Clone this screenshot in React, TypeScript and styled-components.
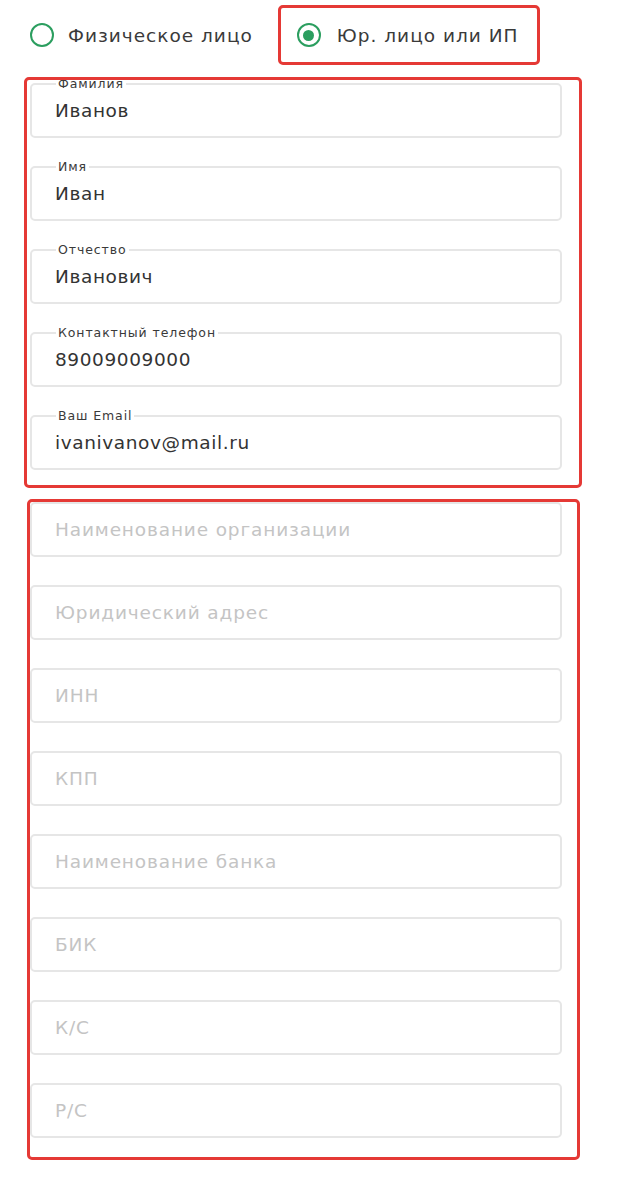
import styled, { createGlobalStyle } from 'styled-components';

const GlobalStyle = createGlobalStyle`
	body {
		margin: 0;
		background: #ffffff;
		font-family: 'DejaVu Sans', 'Noto Sans', sans-serif;
	}
`;

const Page = styled.div`
	width: 628px;
	height: 1177px;
	padding-top: 5px;
	box-sizing: border-box;
`;

const RadioRow = styled.div`
	display: flex;
	align-items: center;
	padding-left: 30px;
	gap: 25px;
`;

const RadioItem = styled.label<{ $marked?: boolean }>`
	display: flex;
	align-items: center;
	gap: 14px;
	height: 60px;
	box-sizing: border-box;
	font-size: 18.5px;
	letter-spacing: 1px;
	color: #3a3a3a;
	cursor: pointer;
	${(p) =>
		p.$marked &&
		`
		border: 3px solid #e53935;
		border-radius: 5px;
		padding: 0 19px 0 16px;
		gap: 16px;
	`}
`;

const Circle = styled.span<{ $checked?: boolean }>`
	width: 24px;
	height: 24px;
	box-sizing: border-box;
	border: 2.5px solid #2b9e5f;
	border-radius: 50%;
	display: flex;
	align-items: center;
	justify-content: center;

	&::after {
		content: '';
		width: 11px;
		height: 11px;
		border-radius: 50%;
		background: #2b9e5f;
		display: ${(p) => (p.$checked ? 'block' : 'none')};
	}
`;

const Section = styled.div<{ $first?: boolean }>`
	position: relative;
	display: flex;
	flex-direction: column;
	gap: 28px;
	box-sizing: border-box;
	margin-left: ${(p) => (p.$first ? '24px' : '27px')};
	margin-top: ${(p) => (p.$first ? '12px' : '11px')};
	width: ${(p) => (p.$first ? '558px' : '553px')};
	padding: ${(p) => (p.$first ? '6px 20px 18px 6px' : '3px 18px 22px 3px')};

	&::after {
		content: '';
		position: absolute;
		inset: 0;
		border: 3px solid #e53935;
		border-radius: 5px;
		pointer-events: none;
	}
`;

const Field = styled.div`
	position: relative;
	height: 55px;
	width: 532px;
	box-sizing: border-box;
	border: 2px solid #e6e6e6;
	border-radius: 5px;
	display: flex;
	align-items: center;
	padding-left: 23px;
`;

const Legend = styled.span`
	position: absolute;
	top: -9px;
	left: 24px;
	padding: 0 2px;
	background: #ffffff;
	font-size: 12.5px;
	line-height: 16px;
	letter-spacing: 0.9px;
	color: #3a3a3a;
`;

const Value = styled.span<{ $empty?: boolean }>`
	font-size: 18.5px;
	letter-spacing: ${(p) => (p.$empty ? '0.85px' : '0.6px')};
	color: ${(p) => (p.$empty ? '#c4c4c4' : '#333333')};
`;

const personal = [
	{ label: 'Фамилия', value: 'Иванов' },
	{ label: 'Имя', value: 'Иван' },
	{ label: 'Отчество', value: 'Иванович' },
	{ label: 'Контактный телефон', value: '89009009000' },
	{ label: 'Ваш Email', value: 'ivanivanov@mail.ru' },
];

const company = [
	'Наименование организации',
	'Юридический адрес',
	'ИНН',
	'КПП',
	'Наименование банка',
	'БИК',
	'К/С',
	'Р/С',
];

const App = () => {
	return (
		<Page>
			<GlobalStyle />
			<RadioRow>
				<RadioItem>
					<Circle />
					Физическое лицо
				</RadioItem>
				<RadioItem $marked>
					<Circle $checked />
					Юр. лицо или ИП
				</RadioItem>
			</RadioRow>
			<Section $first>
				{personal.map((f) => (
					<Field key={f.label}>
						<Legend>{f.label}</Legend>
						<Value>{f.value}</Value>
					</Field>
				))}
			</Section>
			<Section>
				{company.map((p) => (
					<Field key={p}>
						<Value $empty>{p}</Value>
					</Field>
				))}
			</Section>
		</Page>
	);
};

export default App;
